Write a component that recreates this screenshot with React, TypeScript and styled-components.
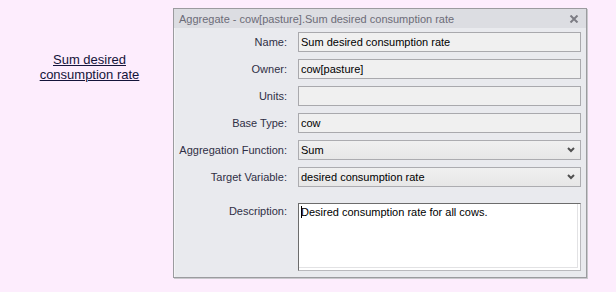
import React from 'react';
import styled, { createGlobalStyle } from 'styled-components';

const GlobalStyle = createGlobalStyle`
    html, body {
        margin: 0;
        padding: 0;
        background: #fdedfd;
    }
    body {
        font-family: "Liberation Sans", Arial, sans-serif;
    }
`

type FieldRow = {
    label: string
    value: string
    kind: 'text' | 'select'
}

const rows: FieldRow[] = [
    { label: 'Name:', value: 'Sum desired consumption rate', kind: 'text' },
    { label: 'Owner:', value: 'cow[pasture]', kind: 'text' },
    { label: 'Units:', value: '', kind: 'text' },
    { label: 'Base Type:', value: 'cow', kind: 'text' },
    { label: 'Aggregation Function:', value: 'Sum', kind: 'select' },
    { label: 'Target Variable:', value: 'desired consumption rate', kind: 'select' },
]

const Chevron = () => (
    <svg width="8" height="6" viewBox="0 0 8 6">
        <path d="M1 1 L4 4 L7 1" fill="none" stroke="#505050" strokeWidth="2" />
    </svg>
)

const CloseIcon = () => (
    <svg width="10" height="8" viewBox="0 0 10 8">
        <path d="M1.5 0.5 L8.5 7.5 M8.5 0.5 L1.5 7.5" stroke="#7c7c84" strokeWidth="2" />
    </svg>
)

const App: React.FC = () => {
    return (
        <>
            <GlobalStyle />
            <Page>
                <Side>
                    <NodeLink href="#">Sum desired<br />consumption rate</NodeLink>
                </Side>
                <Dialog>
                    <TitleBar>
                        <Title>Aggregate - cow[pasture].Sum desired consumption rate</Title>
                        <CloseButton><CloseIcon /></CloseButton>
                    </TitleBar>
                    <Form>
                        {rows.map((row) => (
                            <React.Fragment key={row.label}>
                                <Label>{row.label}</Label>
                                {row.kind === 'text' ? (
                                    <TextField readOnly value={row.value} />
                                ) : (
                                    <Select>
                                        <span>{row.value}</span>
                                        <Chevron />
                                    </Select>
                                )}
                            </React.Fragment>
                        ))}
                        <Label $top>Description:</Label>
                        <Description>
                            <Caret />Desired consumption rate for all cows.
                        </Description>
                    </Form>
                </Dialog>
            </Page>
        </>
    )
}

const Page = styled.div`
    display: flex;
    height: 292px;
    width: 616px;
`

const Side = styled.div`
    width: 173px;
    box-sizing: border-box;
    padding: 52px 0 0 6px;
    display: flex;
    justify-content: center;
    align-items: flex-start;
`

const NodeLink = styled.a`
    font-size: 13px;
    line-height: 15px;
    color: #14143a;
    text-align: center;
    text-decoration: underline;
`

const Dialog = styled.div`
    margin-top: 8px;
    width: 414px;
    height: 270px;
    box-sizing: border-box;
    border: 1px solid #9b9b9f;
    box-shadow: inset 1px 1px 0 #f4f4f6, 1px 1px 0 #c9c9cd;
    background: #e9eaee;
    display: flex;
    flex-direction: column;
`

const TitleBar = styled.div`
    height: 19px;
    flex-shrink: 0;
    display: flex;
    align-items: center;
    justify-content: space-between;
    padding: 0 7px 0 5px;
    background: #dcdde2;
    font-size: 11px;
    color: #6c6c78;
`

const Title = styled.span`
    white-space: nowrap;
`

const CloseButton = styled.span`
    display: flex;
    align-items: center;
`

const Form = styled.div`
    display: grid;
    grid-template-columns: 113px 283px;
    grid-auto-rows: 20px;
    column-gap: 11px;
    row-gap: 7px;
    padding: 4px 4px 0 0;
    font-size: 11px;
`

const Label = styled.div<{ $top?: boolean }>`
    text-align: right;
    color: #2f2f45;
    white-space: nowrap;
    align-self: ${(p) => (p.$top ? 'start' : 'center')};
    margin-top: ${(p) => (p.$top ? '11px' : '0')};
`

const TextField = styled.input`
    box-sizing: border-box;
    width: 100%;
    height: 20px;
    margin: 0;
    padding: 0 2px;
    border: 1px solid #a9a9ad;
    border-radius: 0;
    background: #f0f0f0;
    font-family: "Liberation Sans", Arial, sans-serif;
    font-size: 11px;
    color: #000;
    outline: none;
`

const Select = styled.div`
    box-sizing: border-box;
    height: 20px;
    display: flex;
    align-items: center;
    justify-content: space-between;
    padding: 0 5px 0 2px;
    border: 1px solid #acacb0;
    background: linear-gradient(#f0f0f0, #e7e7e7);
    color: #000;
`

const Description = styled.div`
    grid-row: span 3;
    margin-top: 9px;
    height: 68px;
    box-sizing: border-box;
    padding: 2px 2px;
    border: 1px solid;
    border-color: #6c6c6c #b9b9bd #b9b9bd #6c6c6c;
    box-shadow: inset -2px -2px 0 #fff, inset -3px -3px 0 #e2e2e4;
    background: #fff;
    color: #000;
    line-height: 13px;
`

const Caret = styled.span`
    display: inline-block;
    width: 1px;
    height: 12px;
    margin-right: -1px;
    vertical-align: -2px;
    background: #000;
`

export default App;
